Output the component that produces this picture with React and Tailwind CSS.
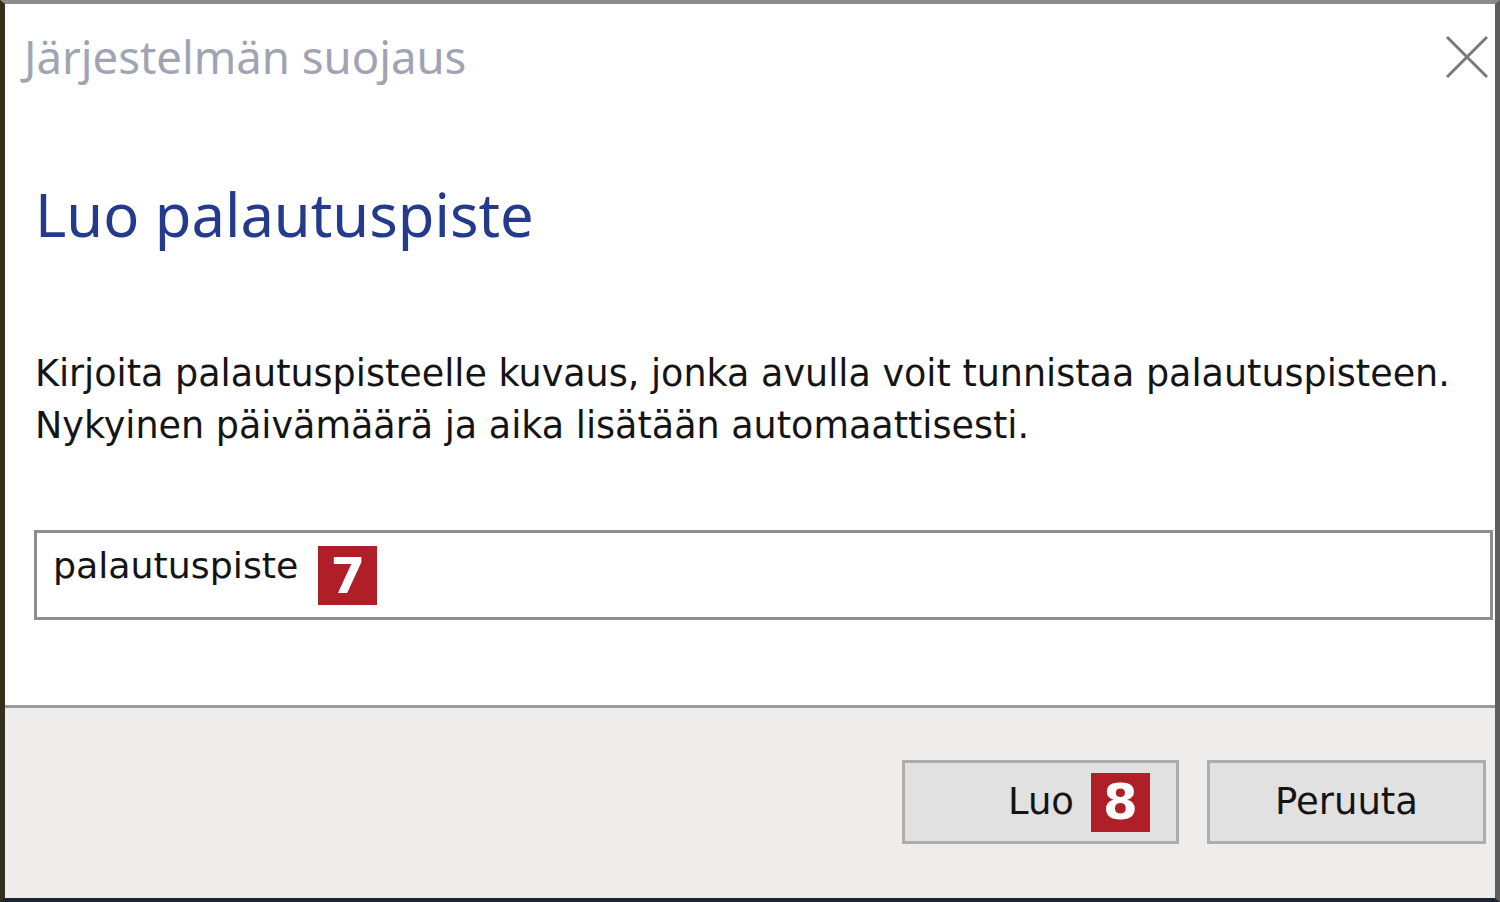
import React from "react";

const tahoma = { fontFamily: '"DejaVu Sans", sans-serif' };

function Badge({ children, className = "" }) {
  return (
    <span
      className={`inline-flex items-center justify-center bg-[#b01e28] text-white font-bold text-[50px] leading-none w-[59px] h-[59px] ${className}`}
      style={{ fontFamily: '"DejaVu Sans", sans-serif' }}
    >
      {children}
    </span>
  );
}

export default function App() {
  return (
    <div className="w-[1500px] h-[902px] flex flex-col bg-white border-t-[4px] border-t-[#8c8c8c] border-l-[5px] border-l-[#35301c] border-r-[5px] border-r-[#5e5e5e] border-b-[4px] border-b-[#1d2532] overflow-hidden">
      <div className="flex-1 flex flex-col bg-white">
        <div className="flex items-start justify-between pl-[19px] pr-[6px] pt-[22px]">
          <div
            className="text-[45.5px] leading-[60px] text-[#a0a4b2]"
            style={{ fontFamily: '"Noto Sans", sans-serif' }}
          >
            Järjestelmän suojaus
          </div>
          <svg width="44" height="44" viewBox="0 0 44 44" className="mt-[9px]">
            <path d="M2 2 L42 42 M42 2 L2 42" stroke="#7a7a7a" strokeWidth="3" fill="none" />
          </svg>
        </div>
        <div
          className="pl-[30px] mt-[88px] text-[59.7px] leading-[80px] text-[#243a8c]"
          style={{ fontFamily: '"Noto Sans", sans-serif' }}
        >
          Luo palautuspiste
        </div>
        <div
          className="pl-[30px] mt-[94px] text-[36.5px] leading-[52px] text-[#141414]"
          style={tahoma}
        >
          <div>Kirjoita palautuspisteelle kuvaus, jonka avulla voit tunnistaa palautuspisteen.</div>
          <div>Nykyinen päivämäärä ja aika lisätään automaattisesti.</div>
        </div>
        <div className="ml-[29px] mr-[2px] mt-[78px] h-[90px] border-[3px] border-[#8e8e8e] bg-white flex items-start pl-[16px] pt-[11px]">
          <span className="text-[36.3px] leading-[44px] text-[#141414]" style={tahoma}>
            palautuspiste
          </span>
          <Badge className="ml-[20px] mt-[2px]">7</Badge>
        </div>
      </div>
      <div className="h-[193px] shrink-0 bg-[#eeedeb] border-t-[3px] border-t-[#9a9a9a] flex items-start justify-end gap-[28px] pt-[52px] pr-[9px]">
        <div className="w-[277px] h-[84px] bg-[#e1e1e1] border-[3px] border-[#adadad] flex items-center justify-end pr-[26px] gap-[17px]">
          <span className="text-[37px] text-[#141414]" style={tahoma}>Luo</span>
          <Badge>8</Badge>
        </div>
        <div className="w-[279px] h-[84px] bg-[#e1e1e1] border-[3px] border-[#adadad] flex items-center justify-center">
          <span className="text-[37px] text-[#141414]" style={tahoma}>Peruuta</span>
        </div>
      </div>
    </div>
  );
}
